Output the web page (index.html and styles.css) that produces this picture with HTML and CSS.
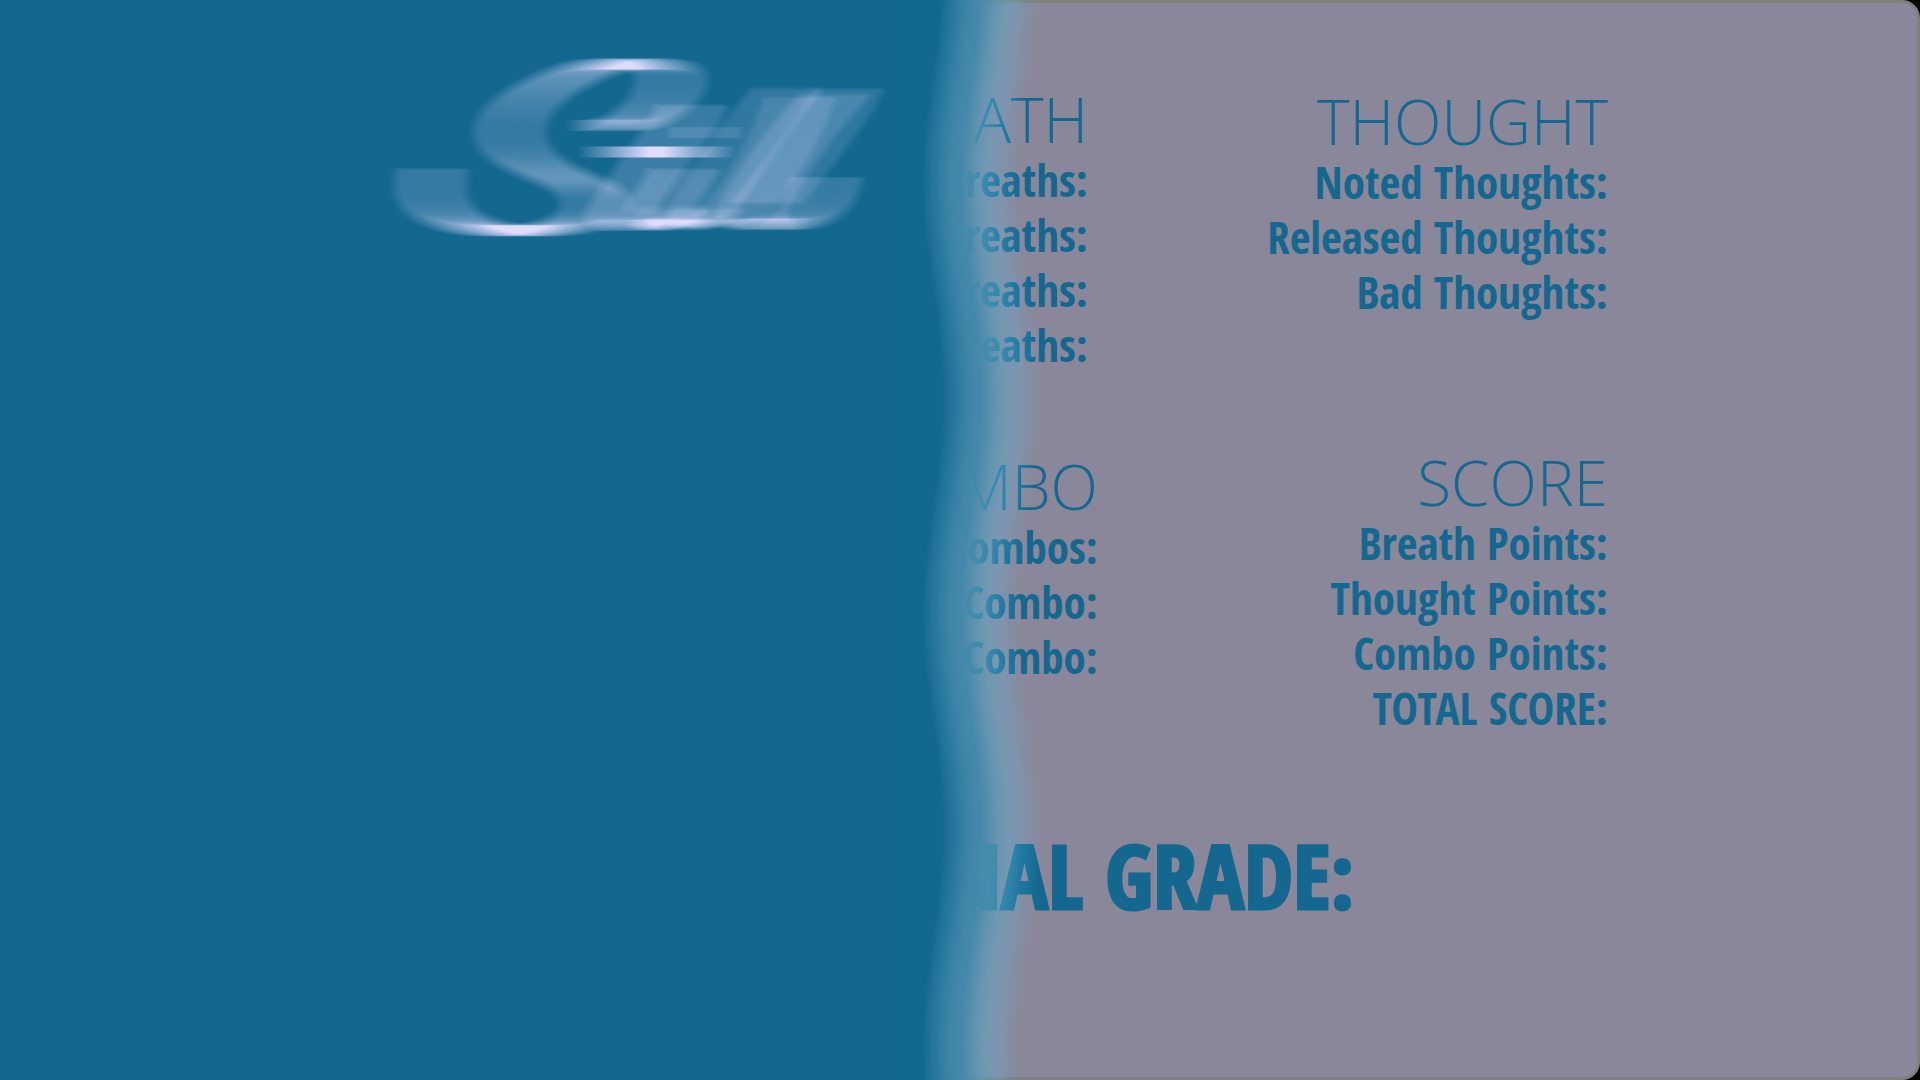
FILE: index.html
```html
<!DOCTYPE html>
<html lang="en">
<head>
<meta charset="utf-8">
<title>Still</title>
<link rel="stylesheet" href="styles.css">
</head>
<body>
<main class="report">
  <div class="stats">
    <div class="stack stack-left">
      <section class="group group-breath">
        <h2 class="title">BREATH</h2>
        <ul class="lines">
          <li>Breaths:</li>
          <li>Breaths:</li>
          <li>Breaths:</li>
          <li>Breaths:</li>
        </ul>
      </section>
      <section class="group">
        <h2 class="title">COMBO</h2>
        <ul class="lines">
          <li>Combos:</li>
          <li>Combo:</li>
          <li>Combo:</li>
        </ul>
      </section>
    </div>
    <div class="stack stack-right">
      <section class="group">
        <h2 class="title">THOUGHT</h2>
        <ul class="lines">
          <li>Noted Thoughts:</li>
          <li>Released Thoughts:</li>
          <li>Bad Thoughts:</li>
        </ul>
      </section>
      <section class="group">
        <h2 class="title">SCORE</h2>
        <ul class="lines">
          <li>Breath Points:</li>
          <li>Thought Points:</li>
          <li>Combo Points:</li>
          <li>TOTAL SCORE:</li>
        </ul>
      </section>
    </div>
  </div>
  <p class="grade">FINAL GRADE:</p>
</main>

<aside class="cover">
  <svg class="logo" width="540" height="220" viewBox="0 0 540 220" role="img" aria-label="Still">
    <defs>
      <filter id="sweep" filterUnits="userSpaceOnUse" x="-60" y="-10" width="660" height="240" color-interpolation-filters="sRGB">
        <feGaussianBlur in="SourceGraphic" stdDeviation="3.4 .5" result="soft"/>
        <feOffset in="soft" dx="36" result="o1"/>
        <feComposite in="soft" in2="o1" operator="arithmetic" k2=".5" k3=".5" result="s1"/>
        <feOffset in="s1" dx="18" result="o2"/>
        <feComposite in="s1" in2="o2" operator="arithmetic" k2=".5" k3=".5" result="s2"/>
        <feOffset in="s2" dx="9" result="o3"/>
        <feComposite in="s2" in2="o3" operator="arithmetic" k2=".5" k3=".5"/>
      </filter>
    </defs>
    <g filter="url(#sweep)">
      <g class="pen" transform="translate(-31) scale(.3444 .3333)">
        <path d="M180 387C168 440 172 482 208 515C256 558 345 573 430 573C540 573 655 548 655 490C655 445 590 428 520 396C450 364 405 325 405 278C405 205 500 145 590 105C655 76 700 71 755 71C830 71 872 80 872 117C872 158 842 195 800 224C762 250 735 257 672 257"/>
        <path d="M705 336H955"/>
        <path d="M935 195C905 270 850 330 800 405C750 480 715 520 728 540C745 570 810 560 880 505"/>
        <path d="M960 278H984"/>
        <path d="M912 387C890 440 830 500 838 530C848 570 920 562 985 500"/>
        <g class="pen-thin">
          <path d="M1213 146C1130 240 1060 350 1000 450C950 520 945 553 985 553C1060 553 1200 330 1246 172"/>
          <path d="M1350 162C1270 250 1190 360 1140 450C1090 520 1100 553 1165 553"/>
          <path d="M1386 146C1350 235 1260 350 1150 490"/>
        </g>
        <path d="M1120 553H1165C1250 553 1310 500 1325 412"/>
      </g>
    </g>
  </svg>
  <svg class="wave" width="140" height="100%" aria-hidden="true">
    <defs>
      <filter id="fade" filterUnits="userSpaceOnUse" x="-200" y="-10" width="400" height="2200" color-interpolation-filters="sRGB">
        <feOffset in="SourceGraphic" dx="50" result="o1"/>
        <feComposite in="SourceGraphic" in2="o1" operator="arithmetic" k2=".5" k3=".5" result="s1"/>
        <feOffset in="s1" dx="25" result="o2"/>
        <feComposite in="s1" in2="o2" operator="arithmetic" k2=".5" k3=".5" result="s2"/>
        <feOffset in="s2" dx="13" result="o3"/>
        <feComposite in="s2" in2="o3" operator="arithmetic" k2=".5" k3=".5" result="s3"/>
        <feOffset in="s3" dx="6" result="o4"/>
        <feComposite in="s3" in2="o4" operator="arithmetic" k2=".5" k3=".5" result="s4"/>
        <feOffset in="s4" dx="3" result="o5"/>
        <feComposite in="s4" in2="o5" operator="arithmetic" k2=".5" k3=".5" result="s5"/>
        <feOffset in="s5" dx="2" result="o6"/>
        <feComposite in="s5" in2="o6" operator="arithmetic" k2=".5" k3=".5" result="ramp"/>
        <feColorMatrix in="ramp" values="0 0 0 1 0  0 0 0 1 0  0 0 0 1 0  0 0 0 1 0"/>
        <feComponentTransfer>
          <feFuncR type="table" tableValues=".333 .333 .333 .373 .345 .314 .27 .25 .20 .14 .078"/>
          <feFuncG type="table" tableValues=".745 .745 .745 .678 .63 .576 .54 .53 .50 .46 .408"/>
          <feFuncB type="table" tableValues=".92 .92 .92 .824 .76 .70 .67 .66 .64 .61 .565"/>
          <feFuncA type="table" tableValues="0 .1 .22 .4 .6 .82 .98 1 1 1 1"/>
        </feComponentTransfer>
      </filter>
    </defs>
    <path filter="url(#fade)" d="M-180 -35H40C40 40 20 105 20 181S40 321 40 397S20 537 20 613S40 753 40 829S20 969 20 1045S40 1185 40 1261S20 1401 20 1477S40 1617 40 1693S20 1833 20 1909S40 2049 40 2125H-180Z"/>
  </svg>
</aside>
</body>
</html>
```
FILE: styles.css
```css
* {
  box-sizing: border-box;
}

html {
  background: #000;
}

body {
  position: relative;
  margin: 0;
  min-height: 100vh;
  overflow-x: hidden;
  display: flex;
  font-family: "Open Sans", sans-serif;
  color: #146890;
}

.report {
  flex: 1;
  border: 3px solid #80807c;
  border-radius: 18px;
  background: #8a879b;
}

.stats {
  display: grid;
  grid-template-columns: 1095fr 510fr 309fr;
  text-align: right;
}

.stack {
  display: flex;
  flex-direction: column;
}

.stack-left {
  gap: 81px;
  padding-top: 83px;
}

.stack-right {
  gap: 130px;
  padding-top: 85px;
}

.group-breath {
  padding-right: 10px;
}

.title {
  margin: 0;
  font-size: 62px;
  font-weight: 300;
  line-height: 66px;
}

.lines {
  margin: 0;
  padding: 0;
  list-style: none;
  font-family: "Open Sans Condensed", "Open Sans", sans-serif;
  font-size: 45px;
  font-weight: 700;
  line-height: 55px;
}

.grade {
  margin: 95px 0 0;
  padding-right: 29.4%;
  text-align: right;
  font-family: "Open Sans Condensed", "Open Sans", sans-serif;
  font-size: 88px;
  font-weight: 800;
  line-height: 90px;
  -webkit-text-stroke: 3px #146890;
}

.cover {
  position: absolute;
  top: 0;
  bottom: 0;
  left: 0;
  width: 48%;
  display: flex;
  justify-content: flex-end;
  align-items: flex-start;
  padding: 40px 12px 0 0;
  background: #146890;
}

.logo {
  flex: none;
  overflow: visible;
}

.pen {
  fill: none;
  stroke: #dfdcff;
  stroke-width: 33;
}

.pen-thin {
  stroke-width: 23;
}

.wave {
  position: absolute;
  top: 0;
  left: calc(100% - 20px);
  height: 100%;
}
```
